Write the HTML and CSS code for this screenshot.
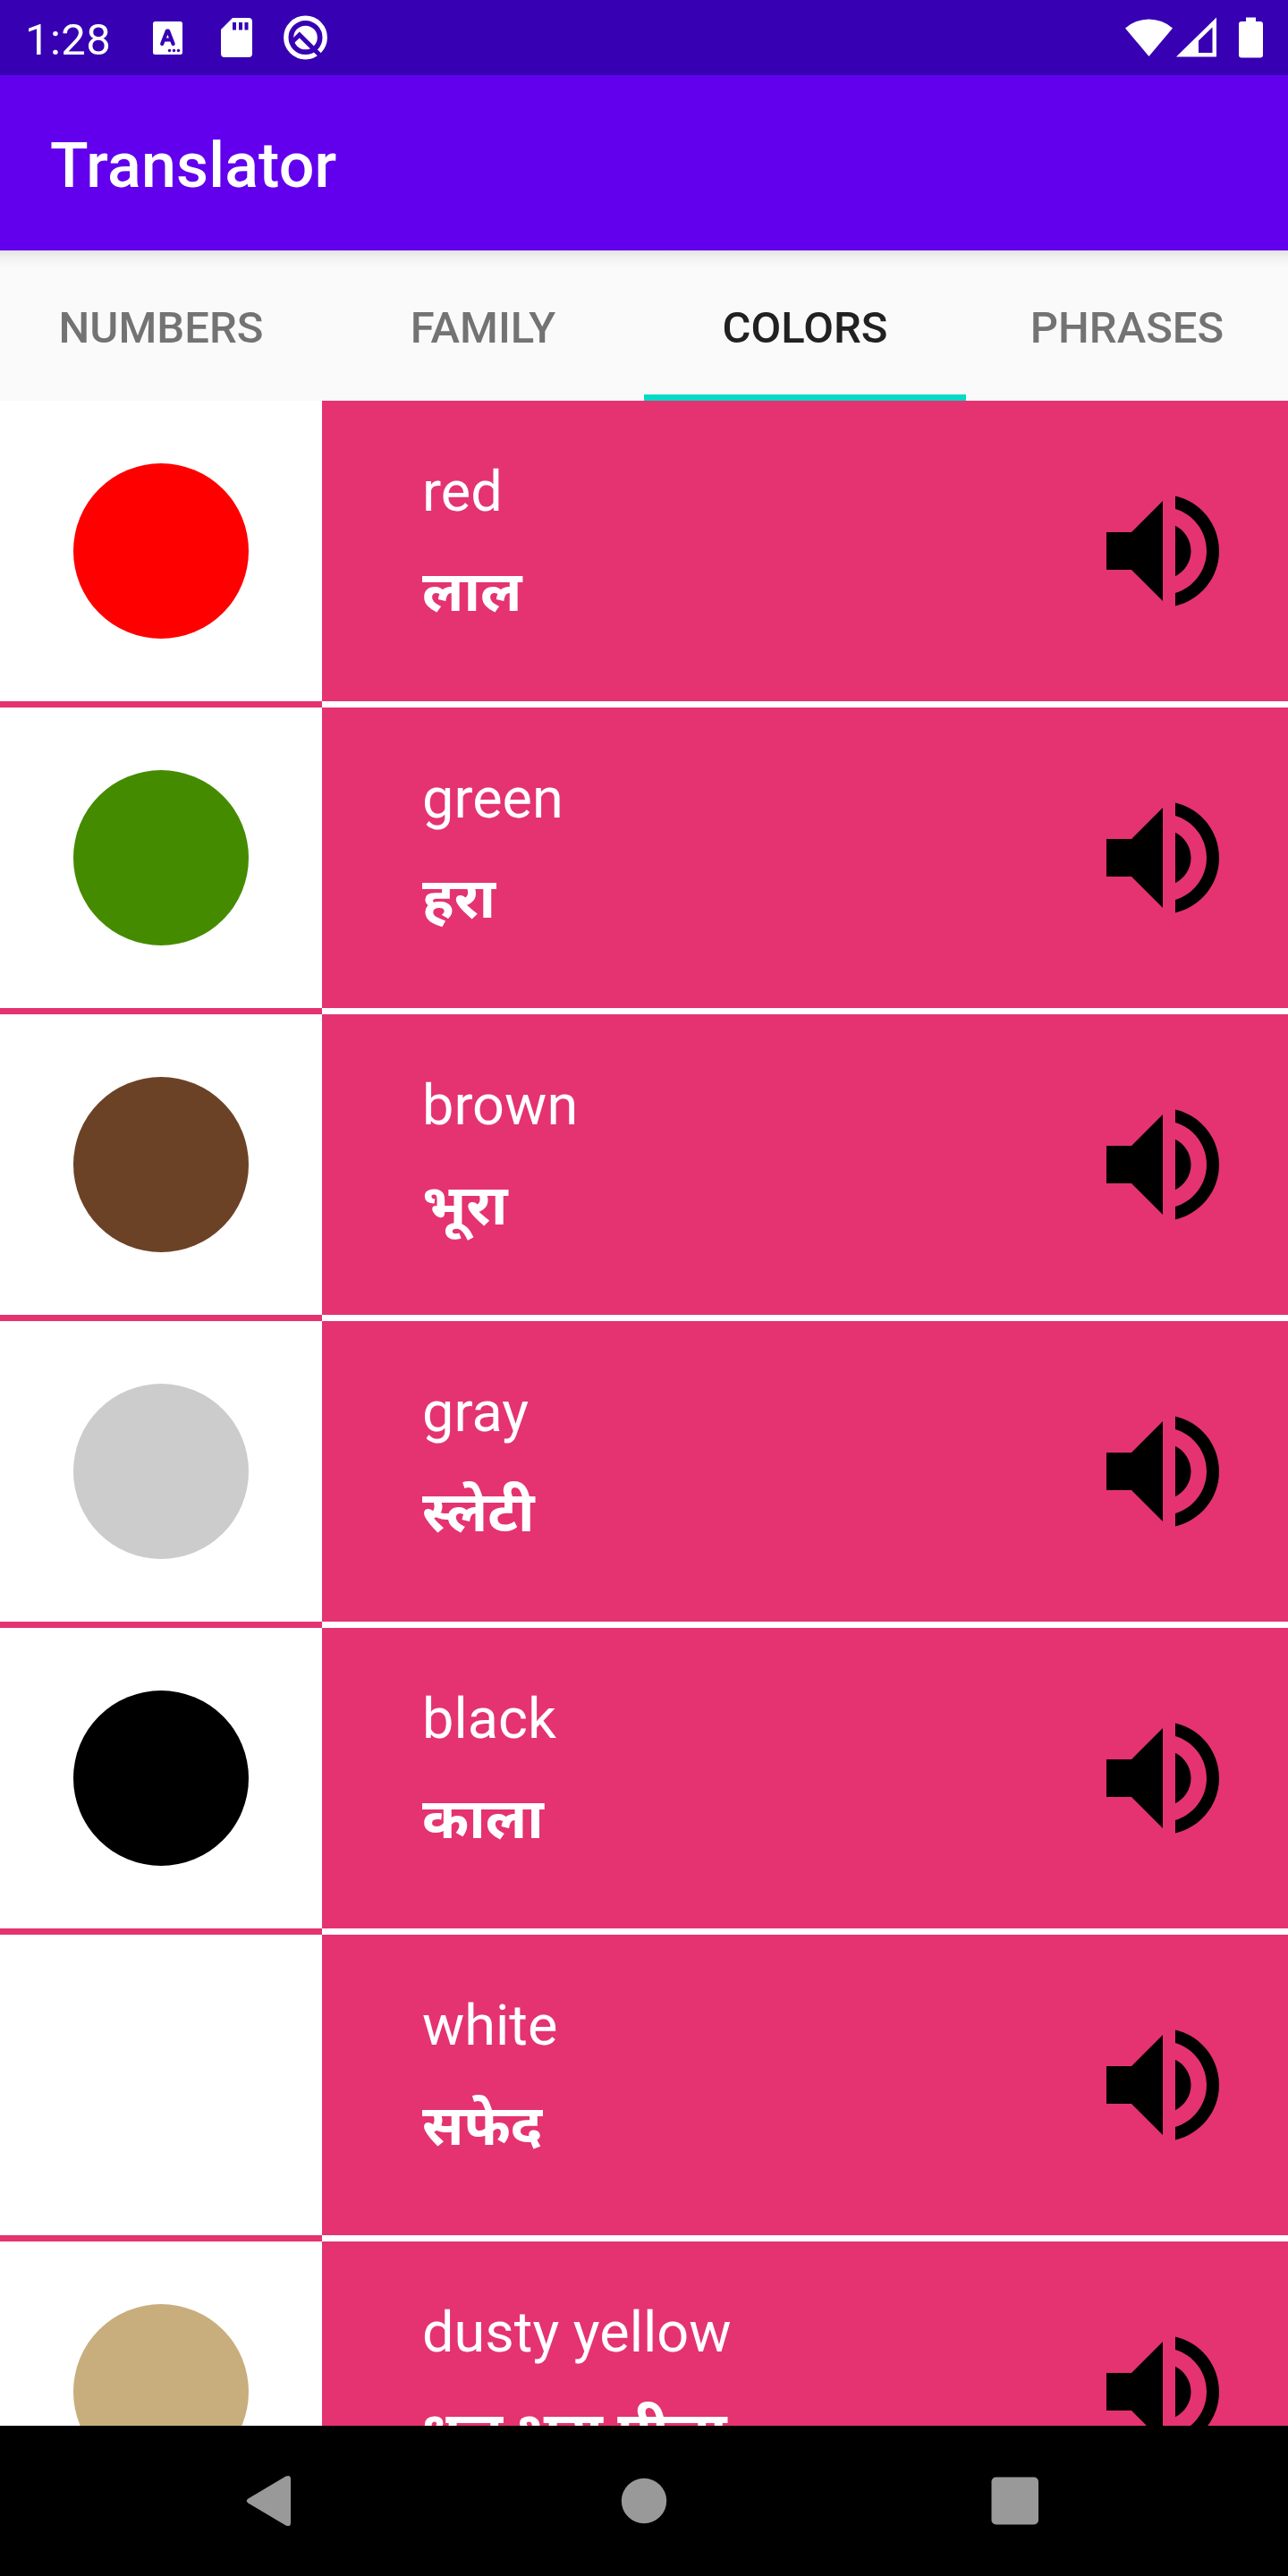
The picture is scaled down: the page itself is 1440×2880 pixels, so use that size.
FILE: index.html
```html
<!DOCTYPE html>
<html lang="en">
<head>
<meta charset="utf-8">
<title>Translator</title>
<link rel="stylesheet" href="styles.css">
</head>
<body>
<svg class="defs" width="0" height="0" aria-hidden="true">
  <symbol id="volume" viewBox="0 0 24 24">
    <path d="M3 9v6h4l5 5V4L7 9H3zm13.500 3c0-1.770-1.020-3.290-2.500-4.030v8.050c1.480-.73 2.500-2.250 2.500-4.020zM14 3.230v2.060c2.890.86 5 3.540 5 6.710s-2.110 5.850-5 6.710v2.060c4.010-.91 7-4.490 7-8.770s-2.990-7.860-7-8.770z"/>
  </symbol>
</svg>
<div class="screen">
  <header class="status">
    <span class="clock">1:28</span>
    <svg class="notices" width="210" height="84" viewBox="160 0 210 84">
      <path fill="#fff" fill-rule="evenodd" d="M173.500 24h28a2.500 2.500 0 0 1 2.500 2.500v32a2.500 2.500 0 0 1-2.500 2.500h-28a2.500 2.500 0 0 1-2.500-2.500v-32a2.500 2.500 0 0 1 2.500-2.500z"/>
      <path fill="none" stroke="#3700b3" stroke-width="4.200" stroke-linecap="round" stroke-linejoin="round" d="M181.200 49l5.600-14.500h1.200l5.600 14.500M184 44.500h7"/>
      <g fill="#3700b3"><circle cx="189.500" cy="56.500" r="1.700"/><circle cx="194.500" cy="56.500" r="1.700"/><circle cx="199.500" cy="56.500" r="1.700"/></g>
      <path fill="#fff" fill-rule="evenodd" d="M260 20h18a4 4 0 0 1 4 4v36a4 4 0 0 1-4 4h-27a4 4 0 0 1-4-4V33zM260 25v8.500h4V25zM267 25v8.500h4V25zM273.500 25v8.500h4V25z"/>
      <circle cx="341.500" cy="42" r="21.700" fill="none" stroke="#fff" stroke-width="5.400"/>
      <circle cx="341.500" cy="42" r="13.300" fill="#fff"/>
      <path fill="none" stroke="#3700b3" stroke-width="5" d="M326 47.500l8.800-8.500L361 65"/>
    </svg>
    <svg class="system" width="180" height="84" viewBox="1240 0 180 84" fill="#fff">
      <path d="M1258 31.500a40 40 0 0 1 53 0L1284.500 63z"/>
      <path fill-rule="evenodd" d="M1315 63.500L1360 19.500v44zM1340 45.500V59h15.500V30.500z"/>
      <path d="M1393 19.500h11V24h5a3 3 0 0 1 3 3v34.500a3 3 0 0 1-3 3h-21a3 3 0 0 1-3-3V27a3 3 0 0 1 3-3h5z"/>
    </svg>
  </header>
  <div class="appbar"><h1>Translator</h1></div>
  <nav class="tabs">
    <a class="tab">NUMBERS</a>
    <a class="tab">FAMILY</a>
    <a class="tab active">COLORS</a>
    <a class="tab">PHRASES</a>
  </nav>
  <main class="list">
    <div class="row"><div class="thumb"><i class="dot red"></i></div><div class="words"><p class="en">red</p><p class="hi" lang="hi">लाल</p></div><svg class="speaker"><use href="#volume"/></svg></div>
    <div class="row"><div class="thumb"><i class="dot green"></i></div><div class="words"><p class="en">green</p><p class="hi" lang="hi">हरा</p></div><svg class="speaker"><use href="#volume"/></svg></div>
    <div class="row"><div class="thumb"><i class="dot brown"></i></div><div class="words"><p class="en">brown</p><p class="hi" lang="hi">भूरा</p></div><svg class="speaker"><use href="#volume"/></svg></div>
    <div class="row"><div class="thumb"><i class="dot gray"></i></div><div class="words"><p class="en">gray</p><p class="hi" lang="hi">स्लेटी</p></div><svg class="speaker"><use href="#volume"/></svg></div>
    <div class="row"><div class="thumb"><i class="dot black"></i></div><div class="words"><p class="en">black</p><p class="hi" lang="hi">काला</p></div><svg class="speaker"><use href="#volume"/></svg></div>
    <div class="row"><div class="thumb"><i class="dot white"></i></div><div class="words"><p class="en">white</p><p class="hi" lang="hi">सफेद</p></div><svg class="speaker"><use href="#volume"/></svg></div>
    <div class="row"><div class="thumb"><i class="dot dusty"></i></div><div class="words"><p class="en">dusty yellow</p><p class="hi" lang="hi">धूल भरा पीला</p></div><svg class="speaker"><use href="#volume"/></svg></div>
  </main>
  <footer class="navbar">
    <svg width="1440" height="168" viewBox="0 2712 1440 168" fill="#999">
      <path d="M319.500 2768.600q5.500-2.200 5.500 3v48.800q0 5.200-5.500 3l-42-24.800q-3.500-2.600 0-5.200z"/>
      <circle cx="720" cy="2796" r="25.200"/>
      <rect x="1108.500" y="2769.500" width="52.500" height="53" rx="5"/>
    </svg>
  </footer>
</div>
</body>
</html>
```
FILE: styles.css
```css
* { box-sizing: border-box; }
body { margin: 0; font-family: Roboto, "Noto Sans", sans-serif; }
h1, p { margin: 0; }
svg { display: block; }
.defs { position: absolute; }
.screen { width: 1440px; height: 2880px; display: flex; flex-direction: column; overflow: hidden; background: #fafafa; }
.status { flex: none; height: 84px; display: flex; background: #3700b3; color: #fff; }
.clock { width: 132px; margin-left: 28px; font-size: 49px; line-height: 89px; letter-spacing: 0.4px; }
.system { margin-left: auto; margin-right: 20px; }
.appbar { flex: none; height: 196px; padding-left: 56px; background: #6200ee; color: #fff; }
.appbar h1 { font-size: 70px; font-weight: 500; line-height: 202px; letter-spacing: 0.15px; }
.tabs { flex: none; height: 168px; display: flex; background: linear-gradient(#e3e3e3, #f0f0f0 7px, #f7f7f7 14px, #fafafa 19px); }
.tab { flex: 1; text-align: center; font-size: 49px; font-weight: 500; line-height: 173px; color: #737373; }
.tab.active { color: #212121; border-bottom: 7px solid #03dac5; }
.list { flex: 1; min-height: 0; overflow: hidden; }
.row { height: 343px; display: flex; align-items: center; background: #e43370; border-bottom: 7px solid #fff; }
.thumb { width: 360px; height: 343px; flex: none; align-self: flex-start; background: #fff; border-bottom: 7px solid #e43370; display: flex; align-items: center; justify-content: center; }
.dot { width: 196px; height: 196px; border-radius: 50%; }
.red { background: #f00; }
.green { background: #458b00; }
.brown { background: #6b4226; }
.gray { background: #ccc; }
.black { background: #000; }
.white { background: #fff; }
.dusty { background: #c8ae7d; }
.words { flex: 1; align-self: flex-start; padding: 45px 0 0 112px; color: #fff; font-size: 63px; white-space: nowrap; }
.en { line-height: 113px; }
.hi { font-family: "Noto Sans", "Noto Sans Devanagari", sans-serif; font-weight: 700; line-height: 105px; }
.speaker { flex: none; width: 168px; height: 168px; margin-right: 56px; }
.navbar { flex: none; height: 168px; background: #000; }
```
